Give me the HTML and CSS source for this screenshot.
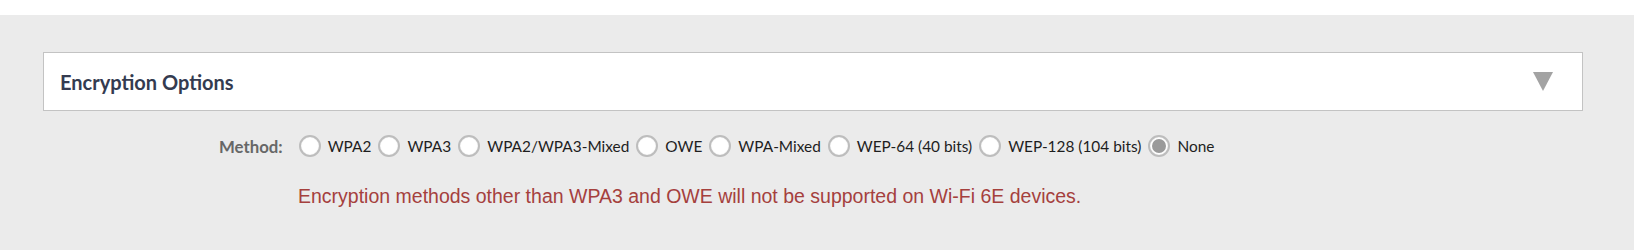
FILE: index.html
```html
<!DOCTYPE html>
<html lang="en">
<head>
<meta charset="utf-8">
<title>Encryption Options</title>
<link rel="stylesheet" href="styles.css">
</head>
<body>
<div class="topbar"></div>
<main class="content">
  <section class="panel">
    <h2 class="panel-title">Encryption Options</h2>
    <span class="caret" aria-hidden="true"></span>
  </section>
  <div class="method-row">
    <span class="field-label">Method:</span>
    <div class="options">
      <label class="opt"><input type="radio" name="m" class="radio"><span>WPA2</span></label>
      <label class="opt"><input type="radio" name="m" class="radio"><span>WPA3</span></label>
      <label class="opt"><input type="radio" name="m" class="radio"><span>WPA2/WPA3-Mixed</span></label>
      <label class="opt"><input type="radio" name="m" class="radio"><span>OWE</span></label>
      <label class="opt"><input type="radio" name="m" class="radio"><span>WPA-Mixed</span></label>
      <label class="opt"><input type="radio" name="m" class="radio"><span>WEP-64 (40 bits)</span></label>
      <label class="opt"><input type="radio" name="m" class="radio"><span>WEP-128 (104 bits)</span></label>
      <label class="opt"><input type="radio" name="m" class="radio" checked><span>None</span></label>
    </div>
  </div>
  <p class="warning">Encryption methods other than WPA3 and OWE will not be supported on Wi-Fi 6E devices.</p>
</main>
</body>
</html>
```

FILE: styles.css
```css
html, body {
  margin: 0;
  padding: 0;
  height: 100%;
}
body {
  background: #ebebeb;
  font-family: Lato, "Open Sans", sans-serif;
  display: flex;
  flex-direction: column;
}
.topbar {
  height: 15px;
  background: #ffffff;
  flex: none;
}
.content {
  flex: 1;
  padding: 37px 51px 0 43px;
}
.panel {
  height: 57px;
  background: #ffffff;
  border: 1px solid #c3c3c3;
  display: flex;
  align-items: center;
  justify-content: space-between;
  padding: 0 29px 0 16px;
}
.panel-title {
  margin: 0;
  font-size: 20px;
  font-weight: 700;
  color: #343b50;
}
.caret {
  width: 0;
  height: 0;
  border-left: 10.5px solid transparent;
  border-right: 10.5px solid transparent;
  border-top: 19px solid #a3a3a3;
}
.method-row {
  display: flex;
  align-items: center;
  margin-top: 24px;
  padding-left: 176px;
  height: 22px;
}
.field-label {
  font-size: 16.8px;
  font-weight: 700;
  color: #676767;
  margin-right: 16px;
}
.options {
  display: flex;
  align-items: center;
  gap: 7px;
}
.opt {
  display: flex;
  align-items: center;
  gap: 7px;
  font-size: 15.4px;
  color: #1e1e1e;
}
.radio {
  appearance: none;
  -webkit-appearance: none;
  margin: 0;
  width: 22px;
  height: 22px;
  border-radius: 50%;
  border: 2px solid #bdbdbd;
  background: #ffffff;
  box-shadow: inset 0 0 1px #d0d0d0;
  display: grid;
  place-items: center;
}
.radio:checked::before {
  content: "";
  width: 14px;
  height: 14px;
  border-radius: 50%;
  background: #9a9a9a;
}
.warning {
  margin: 28px 0 0 255px;
  font-family: "Liberation Sans", Arial, sans-serif;
  font-size: 19.5px;
  color: #a5403d;
}
```
